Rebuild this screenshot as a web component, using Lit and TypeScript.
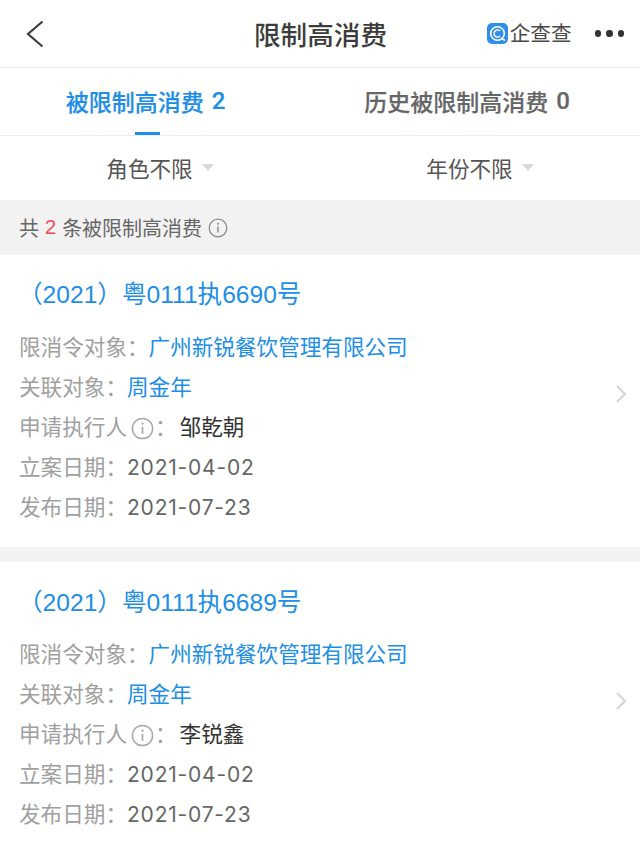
import { LitElement, css, html, nothing } from 'lit';
import { customElement } from 'lit/decorators.js';

interface CaseItem {
  title: string;
  executor: string;
}

const CASES: CaseItem[] = [
  { title: '（2021）粤0111执6690号', executor: '邹乾朝' },
  { title: '（2021）粤0111执6689号', executor: '李锐鑫' },
];

const infoIcon = (size: number) => html`
  <svg class="info" width=${size} height=${size} viewBox="0 0 20 20" fill="none" stroke="currentColor">
    <circle cx="10" cy="10" r="8.8" stroke-width="1.3"></circle>
    <path d="M10 8.6v6" stroke-width="1.5"></path>
    <circle cx="10" cy="5.8" r="1" fill="currentColor" stroke="none"></circle>
  </svg>
`;

@customElement('app-root')
export class AppRoot extends LitElement {
  static styles = css`
    :host {
      display: block;
      width: 640px;
      height: 855px;
      overflow: hidden;
      background: #fff;
      font-family: 'Liberation Sans', 'Noto Sans CJK SC', sans-serif;
    }

    .nav {
      display: grid;
      grid-template-columns: 1fr auto 1fr;
      align-items: center;
      height: 67px;
      padding: 0 16px 0 26px;
      border-bottom: 1px solid #eeeeee;
    }

    .nav-title {
      font-size: 26.6px;
      font-weight: 500;
      color: #3c3c3c;
      margin-left: -9px;
    }

    .nav-right {
      display: flex;
      align-items: center;
      justify-content: flex-end;
    }

    .brand {
      display: flex;
      align-items: center;
      gap: 2px;
      margin-right: 23px;
    }

    .brand-name {
      font-size: 20.6px;
      line-height: 24px;
      color: #4a4a4a;
    }

    .dots {
      display: flex;
      gap: 5px;
    }

    .dots i {
      width: 6.5px;
      height: 6.5px;
      border-radius: 50%;
      background: #333;
    }

    .tabs {
      display: grid;
      grid-template-columns: 294px 346px;
      height: 67px;
      border-bottom: 1px solid #eeeeee;
    }

    .tab {
      position: relative;
      display: flex;
      align-items: center;
      justify-content: center;
      padding-bottom: 1px;
      font-family: Roboto, 'Noto Sans CJK SC', sans-serif;
      font-size: 23px;
      font-weight: 500;
      color: #666;
      -webkit-text-stroke: 0.2px currentColor;
    }

    .tab.active {
      padding-right: 3px;
      color: #208ee6;
    }

    .tab.active::after {
      content: '';
      position: absolute;
      left: 135px;
      bottom: 0;
      width: 25px;
      height: 3px;
      background: #208ee6;
    }

    .num {
      margin-left: 8px;
      font-size: 24px;
    }

    .filters {
      display: flex;
      height: 64px;
    }

    .filter {
      display: flex;
      flex: 1;
      align-items: center;
      justify-content: center;
      gap: 9px;
      padding-bottom: 2px;
      font-size: 21.6px;
      color: #555;
    }

    .caret {
      width: 0;
      height: 0;
      margin-top: 1px;
      border-left: 6.5px solid transparent;
      border-right: 6.5px solid transparent;
      border-top: 7px solid #d9d9d9;
    }

    .summary {
      display: flex;
      align-items: center;
      height: 55px;
      padding-left: 19px;
      background: #f2f2f2;
      font-size: 20px;
      color: #666;
    }

    .summary b {
      margin: 0 6px;
      font-weight: 400;
      color: #f04a55;
    }

    .summary .info {
      margin-left: 6px;
      color: #8c8c8c;
    }

    .card {
      position: relative;
      height: 307px;
      padding: 0 19px;
      box-sizing: border-box;
      border-bottom: 15px solid #f2f2f2;
    }

    .card:last-child {
      padding-top: 1px;
      border-bottom: none;
    }

    .case-title {
      margin: 0 0 14px -1px;
      padding-top: 21px;
      line-height: 38px;
      font-size: 24.6px;
      color: #208ee6;
      white-space: nowrap;
    }

    .card:last-child .case-title {
      margin-bottom: 13px;
    }

    .row {
      display: flex;
      align-items: baseline;
      height: 40px;
      line-height: 40px;
      font-size: 21.6px;
      color: #a0a0a0;
      white-space: nowrap;
    }

    .row .info {
      align-self: center;
      margin: 0 1px 0 4px;
      color: #a8a8a8;
    }

    .link {
      color: #208ee6;
    }

    .dark {
      margin-left: 3px;
      color: #333;
    }

    .date {
      font-family: Inter, 'Liberation Sans', sans-serif;
      font-size: 21px;
      letter-spacing: 0.8px;
      color: #666;
    }

    .chevron {
      position: absolute;
      right: 14px;
      top: 130px;
    }
  `;

  render() {
    return html`
      <div class="nav">
        <svg width="18" height="28" viewBox="0 0 18 28" fill="none">
          <path d="M16.5 1.5 2 14l14.5 12.5" stroke="#3c3c3c" stroke-width="2.2"></path>
        </svg>
        <div class="nav-title">限制高消费</div>
        <div class="nav-right">
          <div class="brand">
            <svg width="21" height="21" viewBox="0 0 21 21" fill="none">
              <rect width="21" height="21" rx="5" fill="#2f8ee8"></rect>
              <circle cx="10.5" cy="10.5" r="6.8" stroke="#fff" stroke-width="1.6"></circle>
              <path d="M13 8a3.5 3.5 0 1 0 0 5" stroke="#fff" stroke-width="1.5"></path>
              <path d="M14 15l4 2.5" stroke="#fff" stroke-width="1.6"></path>
            </svg>
            <span class="brand-name">企查查</span>
          </div>
          <div class="dots"><i></i><i></i><i></i></div>
        </div>
      </div>

      <div class="tabs">
        <div class="tab active">被限制高消费<span class="num">2</span></div>
        <div class="tab">历史被限制高消费<span class="num">0</span></div>
      </div>

      <div class="filters">
        <div class="filter">角色不限<span class="caret"></span></div>
        <div class="filter">年份不限<span class="caret"></span></div>
      </div>

      <div class="summary">共<b>2</b>条被限制高消费${infoIcon(20)}</div>

      ${CASES.map((item) => this.renderCase(item))}
    `;
  }

  private renderCase(item: CaseItem) {
    return html`
      <div class="card">
        <div class="case-title">${item.title}</div>
        ${this.renderRow('限消令对象：', html`<span class="link">广州新锐餐饮管理有限公司</span>`)}
        ${this.renderRow('关联对象：', html`<span class="link">周金年</span>`)}
        ${this.renderRow('申请执行人', html`<span class="dark">${item.executor}</span>`, true)}
        ${this.renderRow('立案日期：', html`<span class="date">2021-04-02</span>`)}
        ${this.renderRow('发布日期：', html`<span class="date">2021-07-23</span>`)}
        <svg class="chevron" width="10" height="18" viewBox="0 0 10 18" fill="none">
          <path d="M1 1l8 8-8 8" stroke="#d4d4d4" stroke-width="2"></path>
        </svg>
      </div>
    `;
  }

  private renderRow(label: string, value: unknown, hasInfo = false) {
    return html`
      <div class="row">
        <span>${label}</span>
        ${hasInfo ? html`${infoIcon(23)}<span>：</span>` : nothing}
        ${value}
      </div>
    `;
  }
}

declare global {
  interface HTMLElementTagNameMap {
    'app-root': AppRoot;
  }
}
